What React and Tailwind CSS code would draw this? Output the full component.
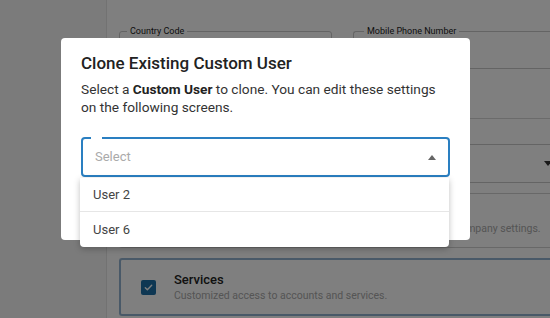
import React from 'react';

const BackgroundPage = () => (
    <div className="absolute inset-0 flex bg-white">
        {/* Sidebar */}
        <div className="w-[107px] h-full bg-[#f7f7f7] border-r border-[#e4e4e4]"></div>

        {/* Form */}
        <div className="flex-1 pl-[12px] pt-[31px] flex flex-col">
            <div className="flex gap-[21px]">
                <div className="relative w-[213px] h-[38px] border border-[#c9c9c9] rounded-[3px]">
                    <span className="absolute -top-[6px] left-[7px] px-[3px] bg-white text-[9px] leading-[11px] text-[#222]">Country Code</span>
                </div>
                <div className="relative flex-1 h-[38px] border border-[#c9c9c9] rounded-l-[3px] border-r-0">
                    <span className="absolute -top-[6px] left-[10px] px-[3px] bg-white text-[9px] leading-[11px] text-[#222]">Mobile Phone Number</span>
                </div>
            </div>

            <div className="mt-[49px] h-px bg-[#d6d6d6]"></div>

            <div className="mt-[25px] h-[39px] border border-r-0 border-[#c9c9c9] rounded-l-[3px] flex items-center justify-end">
                <span className="w-0 h-0 border-l-[4px] border-r-[4px] border-t-[5px] border-l-transparent border-r-transparent border-t-[#333] -mr-[2px]"></span>
            </div>

            <div className="mt-[10px] h-[55px] border border-r-0 border-[#d0d0d0] rounded-l-[3px] flex items-end pb-[10px] pl-[53px]">
                <span className="text-[10.5px] text-[#aaa] whitespace-nowrap">Customized access to user management, organizations and company settings.</span>
            </div>

            <div className="mt-[10px] h-[58px] border-2 border-r-0 border-[#93b3d0] rounded-l-[3px] flex items-center pl-[20px] gap-[18px]">
                <span className="w-[15px] h-[15px] rounded-[2px] bg-[#1c6fa6] flex items-center justify-center">
                    <svg width="11" height="11" viewBox="0 0 24 24" fill="none" stroke="white" strokeWidth="3" strokeLinecap="round" strokeLinejoin="round">
                        <path d="M5 12.5l4.5 4.5L19 7" />
                    </svg>
                </span>
                <div className="flex flex-col">
                    <span className="text-[13px] font-medium leading-[17px] text-[#222]">Services</span>
                    <span className="text-[10.5px] leading-[15px] text-[#aaa]">Customized access to accounts and services.</span>
                </div>
            </div>
        </div>
    </div>
);

const App = () => {
    return (
        <div className="relative w-[550px] h-[318px] overflow-hidden" style={{ fontFamily: 'Roboto, "Liberation Sans", sans-serif' }}>
            <BackgroundPage />

            {/* Backdrop */}
            <div className="absolute inset-0 bg-black/50"></div>

            {/* Dialog */}
            <div className="absolute left-[61px] top-[38px] w-[409px] h-[202px] bg-white rounded-[4px] px-[20px] pt-[13px]">
                <h2 className="text-[17px] leading-[24px] font-medium text-[#222]">Clone Existing Custom User</h2>
                <p className="mt-[5px] text-[13.7px] leading-[18px] text-[#333]">
                    Select a <b className="font-bold text-[#222]">Custom User</b> to clone. You can edit these settings on the following screens.
                </p>

                <div className="relative mt-[21px] h-[40px] border-2 border-[#2a7fc1] rounded-[4px] flex items-center pl-[12px] pr-[12px]">
                    <span className="absolute -top-[2px] left-[8px] w-[11px] h-[2px] bg-white"></span>
                    <span className="flex-1 text-[13px] text-[#aaa]">Select</span>
                    <span className="w-0 h-0 border-l-[4px] border-r-[4px] border-b-[5px] border-l-transparent border-r-transparent border-b-[#666]"></span>
                </div>
            </div>

            {/* Dropdown menu */}
            <div className="absolute left-[80px] top-[178px] w-[369px] bg-white rounded-b-[4px] shadow-[0_2px_6px_rgba(0,0,0,0.25)] flex flex-col">
                <div className="h-[34px] flex items-center pl-[13px] text-[13px] text-[#444] border-b border-[#e6e6e6]">User 2</div>
                <div className="h-[35px] flex items-center pl-[13px] text-[13px] text-[#444]">User 6</div>
            </div>
        </div>
    );
};

export default App;
